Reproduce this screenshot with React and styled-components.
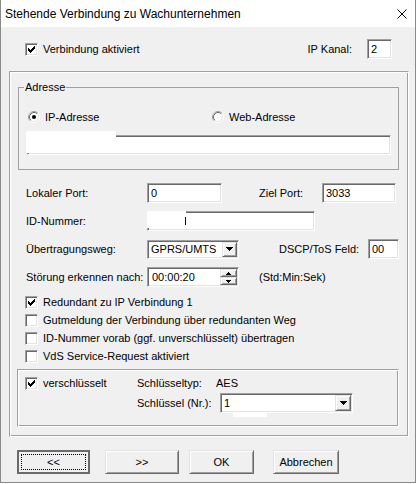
import React from 'react';
import styled, { createGlobalStyle, css } from 'styled-components';

const GlobalStyle = createGlobalStyle`
  html, body { margin: 0; padding: 0; background: #ffffff; }
  body {
    font-family: "Liberation Sans", Arial, sans-serif;
    font-size: 11px;
    color: #000;
  }
  #root { width: 417px; height: 484px; }
`;

/* classic 3D edges */
const sunken = css`
  box-sizing: border-box;
  background: #ffffff;
  border: 1px solid;
  border-color: #a0a0a0 #ffffff #ffffff #a0a0a0;
  box-shadow: inset 1px 1px 0 #696969, inset -1px -1px 0 #e3e3e3;
`;

const raised = css`
  box-sizing: border-box;
  background: #f0f0f0;
  border: 1px solid;
  border-color: #e3e3e3 #696969 #696969 #e3e3e3;
  box-shadow: inset 1px 1px 0 #ffffff, inset -1px -1px 0 #a0a0a0;
`;

const etched = css`
  box-sizing: border-box;
  border: 1px solid;
  border-color: #a0a0a0 #ffffff #ffffff #a0a0a0;
  box-shadow: inset 1px 1px 0 #ffffff, inset -1px -1px 0 #a0a0a0;
`;

const Window = styled.div`
  box-sizing: border-box;
  width: 416px;
  height: 483px;
  background: #f0f0f0;
  border: 1px solid #8a8a8a;
  border-top: none;
  display: flex;
  flex-direction: column;
  overflow: hidden;
`;

const TitleBar = styled.div`
  flex: none;
  height: 27px;
  background: #ffffff;
  display: flex;
  align-items: center;
  justify-content: space-between;
  padding: 0 8px 0 4px;
  font-size: 12px;
  color: #000;
`;

const Content = styled.div`
  display: flex;
  flex-direction: column;
  padding: 0 6px 0 8px;
`;

const TopRow = styled.div`
  margin-top: 12px;
  height: 20px;
  display: flex;
  align-items: center;
  justify-content: space-between;
  padding: 0 17px 0 16px;
`;

const Inline = styled.div`
  display: flex;
  align-items: center;
`;

const Text = styled.span`
  display: block;
  flex: none;
  line-height: 13px;
  white-space: nowrap;
  width: ${p => (p.$w ? `${p.$w}px` : 'auto')};
  margin-left: ${p => p.$ml || 0}px;
  margin-right: ${p => p.$mr || 0}px;
`;

const Panel = styled.div`
  ${etched};
  margin-top: 12px;
  width: 400px;
  padding-bottom: 9px;
  display: flex;
  flex-direction: column;
`;

const Group = styled.fieldset`
  margin: 9px 9px 0 8px;
  padding: 0;
  min-width: 0;
  border: 1px solid #a0a0a0;
`;

const Legend = styled.legend`
  margin-left: 5px;
  padding: 0 1px;
  line-height: 13px;
  font-size: 11px;
`;

const RadioRow = styled.div`
  margin: 16px 0 0 9px;
  height: 14px;
  display: grid;
  grid-template-columns: 184px auto;
  align-items: center;
`;

const Choice = styled.label`
  display: flex;
  align-items: center;
  gap: 5px;
  line-height: 13px;
  white-space: nowrap;
`;

const Field = styled.div`
  ${sunken};
  position: relative;
  flex: none;
  width: ${p => (p.$w ? `${p.$w}px` : 'auto')};
  height: ${p => p.$h || 20}px;
  margin-left: ${p => p.$ml || 0}px;
  padding: 0 3px;
  display: flex;
  align-items: center;
  line-height: 13px;
  white-space: nowrap;
`;

const AddressField = styled(Field)`
  margin: 11px 7px 14px 8px;
`;

/* white masks laid over a field's edge where the value is hidden */
const Mask = styled.span`
  position: absolute;
  background: #ffffff;
  left: ${p => p.$x}px;
  top: ${p => p.$y}px;
  width: ${p => p.$w}px;
  height: ${p => p.$h}px;
`;

const Caret = styled.span`
  position: absolute;
  left: ${p => p.$x}px;
  top: ${p => p.$y}px;
  width: 1px;
  height: 8px;
  background: #000;
`;

const FormRows = styled.div`
  margin: 13px 0 0 16px;
  display: flex;
  flex-direction: column;
  gap: 8px;
`;

const FormRow = styled.div`
  height: 20px;
  display: flex;
  align-items: ${p => (p.$top ? 'flex-start' : 'center')};
`;

const Combo = styled.div`
  ${sunken};
  position: relative;
  flex: none;
  width: ${p => p.$w}px;
  height: ${p => p.$h || 20}px;
  padding: 1px;
  display: flex;
  align-items: stretch;
  margin-left: ${p => p.$ml || 0}px;
`;

const ComboText = styled.span`
  flex: 1;
  min-width: 0;
  padding-left: 2px;
  display: flex;
  align-items: center;
  line-height: 13px;
  white-space: nowrap;
  overflow: hidden;
`;

const ArrowButton = styled.span`
  ${raised};
  flex: none;
  width: ${p => p.$w}px;
  display: flex;
  align-items: center;
  justify-content: center;
`;

const SpinBox = styled.div`
  ${sunken};
  flex: none;
  width: 92px;
  height: 20px;
  padding: 1px;
  display: flex;
  align-items: stretch;
`;

const SpinText = styled.span`
  flex: 1;
  padding-left: 3px;
  display: flex;
  align-items: center;
  line-height: 13px;
`;

const SpinButtons = styled.span`
  flex: none;
  width: 17px;
  display: flex;
  flex-direction: column;
`;

const SpinButton = styled.span`
  ${raised};
  flex: 1;
  display: flex;
  align-items: center;
  justify-content: center;
`;

const CheckList = styled.div`
  margin: 6px 0 0 15px;
  display: flex;
  flex-direction: column;
`;

const CheckRow = styled.label`
  height: ${p => p.$h || 18}px;
  display: flex;
  align-items: center;
  gap: 5px;
  line-height: 13px;
  white-space: nowrap;
`;

const CryptoBox = styled.div`
  ${etched};
  margin: 4px 9px 0 7px;
  padding: 4px 0 13px 7px;
  display: grid;
  grid-template-columns: 112px 83px auto;
  grid-template-rows: 19px 20px;
  align-items: center;
`;

const Cell = styled.div`
  display: flex;
  align-items: center;
  margin-left: ${p => p.$ml || 0}px;
  line-height: 13px;
  white-space: nowrap;
`;

const ButtonRow = styled.div`
  margin-top: 13px;
  display: flex;
`;

const Button = styled.button`
  ${raised};
  flex: none;
  width: ${p => p.$w}px;
  height: 24px;
  margin-left: ${p => p.$ml}px;
  padding: 0;
  font: 11px "Liberation Sans", Arial, sans-serif;
  color: #000;
  ${p =>
    p.$default &&
    css`
      border: 2px solid #6a6a6a;
      box-shadow: none;
      outline: 1px dotted #000;
      outline-offset: -5px;
    `}
`;

const Box = styled.span`
  box-sizing: border-box;
  display: block;
  flex: none;
  width: 13px;
  height: 13px;
  background: #ffffff;
  border: 1px solid;
  border-color: #a0a0a0 #ffffff #ffffff #a0a0a0;
  box-shadow: inset 1px 1px 0 #696969, inset -1px -1px 0 #e3e3e3;
`;

const Glyph = styled.svg`
  display: block;
  flex: none;
`;

/* classic 7x7 tick: each column is three pixels tall */
const TICK = [2, 3, 4, 3, 2, 1, 0]
  .map((t, i) => `M${2 + i} ${2 + t}h1v3h-1z`)
  .join('');

function CheckBox({ checked }) {
  return (
    <Box>
      {checked && (
        <Glyph width="11" height="11" viewBox="0 0 11 11">
          <path d={TICK} fill="#000" shapeRendering="crispEdges" />
        </Glyph>
      )}
    </Box>
  );
}

function Radio({ checked }) {
  return (
    <Glyph width="12" height="12" viewBox="0 0 12 12">
      <circle cx="6" cy="6" r="5" fill="#fff" />
      <path d="M2.11 9.89A5.5 5.5 0 0 1 9.89 2.11" fill="none" stroke="#a0a0a0" />
      <path d="M9.89 2.11A5.5 5.5 0 0 1 2.11 9.89" fill="none" stroke="#ffffff" />
      <path d="M2.82 9.18A4.5 4.5 0 0 1 9.18 2.82" fill="none" stroke="#696969" />
      <path d="M9.18 2.82A4.5 4.5 0 0 1 2.82 9.18" fill="none" stroke="#e3e3e3" />
      {checked && <circle cx="6" cy="6" r="2" fill="#000" />}
    </Glyph>
  );
}

function Arrow({ up }) {
  return (
    <Glyph width="7" height="4" viewBox="0 0 7 4">
      <path d={up ? 'M3.5 0L7 4H0z' : 'M0 0h7L3.5 4z'} fill="#000" shapeRendering="crispEdges" />
    </Glyph>
  );
}

function SmallArrow({ up }) {
  return (
    <Glyph width="5" height="3" viewBox="0 0 5 3">
      <path d={up ? 'M2.5 0L5 3H0z' : 'M0 0h5L2.5 3z'} fill="#000" shapeRendering="crispEdges" />
    </Glyph>
  );
}

function CloseIcon() {
  return (
    <Glyph width="10" height="10" viewBox="0 0 10 10">
      <path d="M0.5 0.5L9.5 9.5M9.5 0.5L0.5 9.5" stroke="#000" strokeWidth="1" fill="none" />
    </Glyph>
  );
}

const options = [
  { label: 'Redundant zu IP Verbindung 1', checked: true },
  { label: 'Gutmeldung der Verbindung über redundanten Weg', checked: false },
  { label: 'ID-Nummer vorab (ggf. unverschlüsselt) übertragen', checked: false },
  { label: 'VdS Service-Request aktiviert', checked: false },
];

export default function App() {
  return (
    <>
      <GlobalStyle />
      <Window>
        <TitleBar>
          <span>Stehende Verbindung zu Wachunternehmen</span>
          <CloseIcon />
        </TitleBar>

        <Content>
          <TopRow>
            <CheckRow $h={20}>
              <CheckBox checked />
              <span>Verbindung aktiviert</span>
            </CheckRow>
            <Inline>
              <Text $mr={15}>IP Kanal:</Text>
              <Field $w={25}>2</Field>
            </Inline>
          </TopRow>

          <Panel>
            <Group>
              <Legend>Adresse</Legend>
              <RadioRow>
                <Choice>
                  <Radio checked />
                  <span>IP-Adresse</span>
                </Choice>
                <Choice>
                  <Radio />
                  <span>Web-Adresse</span>
                </Choice>
              </RadioRow>
              <AddressField>
                <Mask $x={-2} $y={-5} $w={90} $h={22} />
              </AddressField>
            </Group>

            <FormRows>
              <FormRow>
                <Text $w={121}>Lokaler Port:</Text>
                <Field $w={75}>0</Field>
                <Text $w={63} $ml={37}>Ziel Port:</Text>
                <Field $w={74}>3033</Field>
              </FormRow>
              <FormRow>
                <Text $w={121}>ID-Nummer:</Text>
                <Field $w={168}>
                  <Mask $x={-1} $y={-1} $w={39} $h={17} />
                  <Caret $x={37} $y={5} />
                </Field>
              </FormRow>
              <FormRow>
                <Text $w={121}>Übertragungsweg:</Text>
                <Combo $w={92} $h={19}>
                  <ComboText>GPRS/UMTS</ComboText>
                  <ArrowButton $w={15}>
                    <Arrow />
                  </ArrowButton>
                </Combo>
                <Text $w={89} $ml={40}>DSCP/ToS Feld:</Text>
                <Field $w={31}>00</Field>
              </FormRow>
              <FormRow>
                <Text $w={121}>Störung erkennen nach:</Text>
                <SpinBox>
                  <SpinText>00:00:20</SpinText>
                  <SpinButtons>
                    <SpinButton>
                      <SmallArrow up />
                    </SpinButton>
                    <SpinButton>
                      <SmallArrow />
                    </SpinButton>
                  </SpinButtons>
                </SpinBox>
                <Text $ml={20}>(Std:Min:Sek)</Text>
              </FormRow>
            </FormRows>

            <CheckList>
              {options.map(o => (
                <CheckRow key={o.label}>
                  <CheckBox checked={o.checked} />
                  <span>{o.label}</span>
                </CheckRow>
              ))}
            </CheckList>

            <CryptoBox>
              <CheckRow $h={19}>
                <CheckBox checked />
                <span>verschlüsselt</span>
              </CheckRow>
              <Cell>Schlüsseltyp:</Cell>
              <Cell $ml={-4}>AES</Cell>
              <span />
              <Cell>Schlüssel (Nr.):</Cell>
              <Cell>
                <Combo $w={133}>
                  <ComboText>1</ComboText>
                  <ArrowButton $w={16}>
                    <Arrow />
                  </ArrowButton>
                  <Mask $x={12} $y={18} $w={34} $h={5} />
                </Combo>
              </Cell>
            </CryptoBox>
          </Panel>

          <ButtonRow>
            <Button $w={73} $ml={8} $default>
              &lt;&lt;
            </Button>
            <Button $w={74} $ml={15}>
              &gt;&gt;
            </Button>
            <Button $w={65} $ml={10}>
              OK
            </Button>
            <Button $w={66} $ml={19}>
              Abbrechen
            </Button>
          </ButtonRow>
        </Content>
      </Window>
    </>
  );
}
